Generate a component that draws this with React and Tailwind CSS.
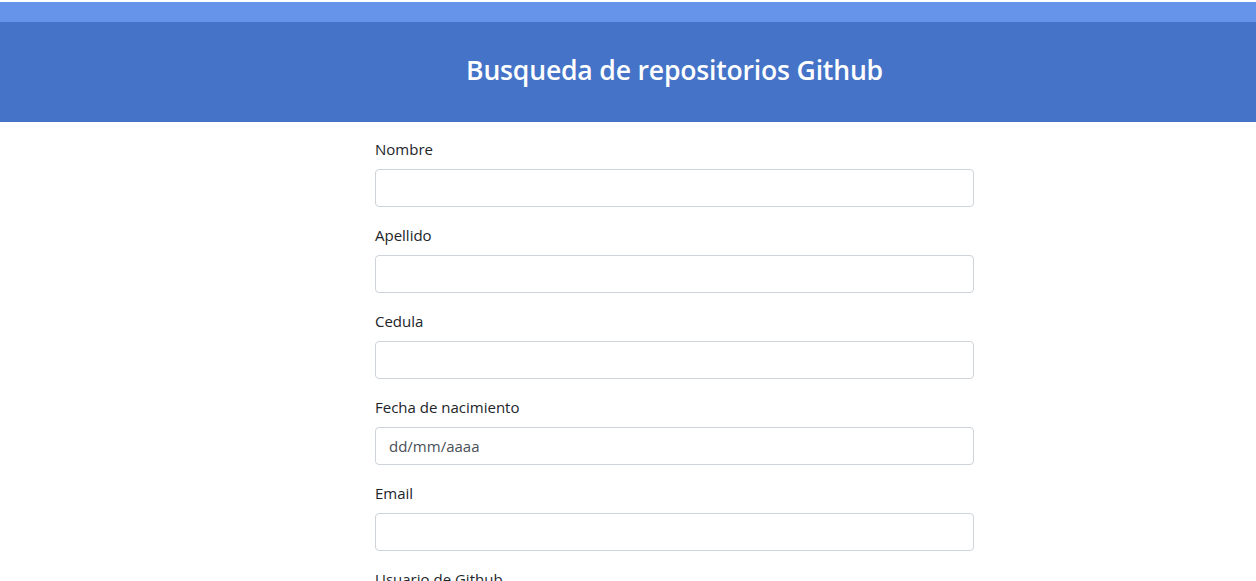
export default function App() {
  const fields = [
    { label: "Nombre", type: "text" },
    { label: "Apellido", type: "text" },
    { label: "Cedula", type: "text" },
    { label: "Fecha de nacimiento", type: "date" },
    { label: "Email", type: "email" },
    { label: "Usuario de Github", type: "text" },
  ];
  return (
    <div className="min-h-screen bg-white text-[#212529]" style={{ fontFamily: '"Open Sans", "Noto Sans", sans-serif' }}>
      <div className="h-[2px] bg-white" />
      <div className="h-[20px] bg-[#6794eb]" />
      <header className="h-[100px] bg-[#4473c8] flex">
        <div className="ml-[375px] w-[599px] flex items-center justify-center">
          <h1 className="text-[26.6px] font-semibold text-white tracking-[-0.2px] leading-none pb-[4px]">
            Busqueda de repositorios Github
          </h1>
        </div>
      </header>
      <form className="ml-[375px] w-[599px] pt-[15px]">
        {fields.map((f) => (
          <div key={f.label} className="mb-4">
            <label className="block mb-2 text-[15px] leading-6">{f.label}</label>
            <div className="h-[38px] rounded-[4px] border border-[#ced4da] bg-white px-[13px] flex items-center text-[15px] text-[#495057]">
              {f.type === "date" ? "dd/mm/aaaa" : ""}
            </div>
          </div>
        ))}
      </form>
    </div>
  );
}
